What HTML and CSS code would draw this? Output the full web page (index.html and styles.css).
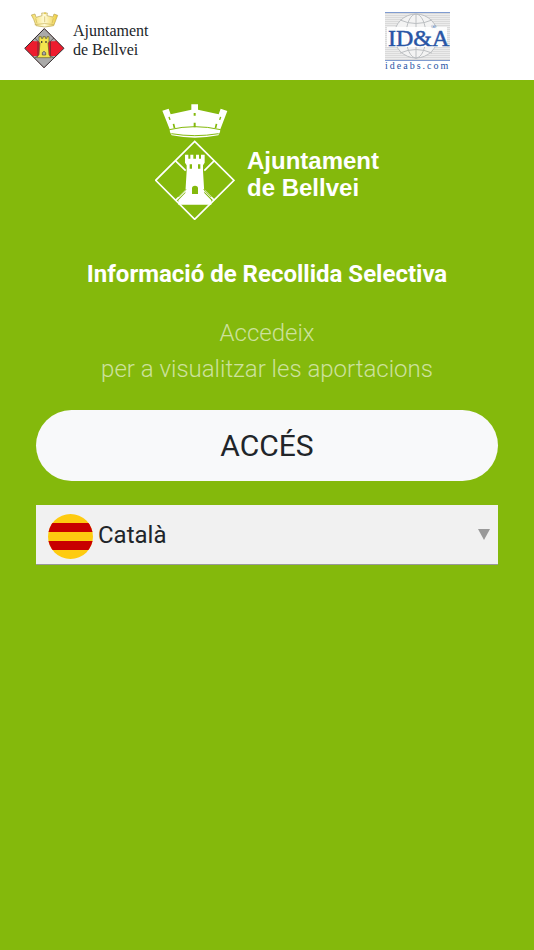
FILE: index.html
```html
<!DOCTYPE html>
<html lang="ca">
<head>
  <meta charset="UTF-8" />
  <meta name="viewport" content="width=device-width, initial-scale=1.0"/>
  <title>Ajuntament de Bellvei</title>
  <link rel="stylesheet" href="styles.css">
</head>
<body>
  <header class="topbar">
    <div class="brand">
      <svg class="brand-crest" viewBox="72 36 123 171" aria-hidden="true">
        <defs>
          <linearGradient id="gold">
            <stop offset="0" stop-color="#f4dc62"/>
            <stop offset="0.5" stop-color="#fffbd8"/>
            <stop offset="1" stop-color="#edcb35"/>
          </linearGradient>
          <clipPath id="lozenge"><path d="M133 85 192 145 132 204 74 145z"/></clipPath>
        </defs>
        <path d="M94 45l11-3 3 10 18-5-1-8h17l-1 8 18 4 3-9 11 4-5 13-7 18q-26 8-53 0l-7-19z" fill="url(#gold)" stroke="#b9a553" stroke-width="2"/>
        <path d="M107 55l4 15M134 49v18M160 55l-4 15M104 74q30-7 58 0" fill="none" stroke="#c8b25b" stroke-width="2"/>
        <circle cx="135" cy="40" r="3" fill="#e3c84c"/>
        <g clip-path="url(#lozenge)">
          <path d="M70 80h126v126H70z" fill="#ed1c2e"/>
          <path d="M85 80h96v32l-17 12h-62l-17-12zM102 168l62 0 12 12v28H90v-28z" fill="#aaa9a8"/>
          <path d="M102 112l12 12v45l-10 4M164 112l-13 12v45l10 4" fill="none" stroke="#333" stroke-width="2"/>
        </g>
        <path d="M117 110h7v5h5v-5h7v5h5v-5h6v18h-3l3 36 6 9h-43l7-9 3-36h-3z" fill="#f3e44d" stroke="#625d30" stroke-width="2"/>
        <path d="M123 123h4v6h-4zM136 123h4v6h-4z" fill="#4a4738"/>
        <path d="M127 165v-7q5-8 10 0v7z" fill="#aaa" stroke="#4a4738" stroke-width="2"/>
        <path d="M133 86 192 145 132 203 74 145z" fill="none" stroke="#333" stroke-width="3"/>
      </svg>
      <p class="brand-name">Ajuntament<br>de Bellvei</p>
    </div>

    <svg class="partner" viewBox="0 0 66 59" role="img" aria-label="ID&amp;A ideabs.com">
      <defs>
        <pattern id="rules" width="4" height="2" patternUnits="userSpaceOnUse">
          <path d="M0 0h4v2H0z" fill="#ececec"/>
          <path d="M0 1.5h4" stroke="#dadada"/>
        </pattern>
      </defs>
      <path d="M0 1h65v47H0z" fill="url(#rules)"/>
      <g fill="none" stroke="#bcbfc2">
        <circle cx="31" cy="24" r="22" fill="#f3f3f3"/>
        <ellipse cx="31" cy="24" rx="10" ry="22"/>
        <path d="M31 2v45M15 8q16 7 32 0M15 41q16-7 32 0M8 24h45"/>
      </g>
      <path d="M2 15h60v20H2z" fill="#fff" opacity="0.9"/>
      <path d="M0 0.5h65M0 48.5h65" stroke="#7f9bd0"/>
      <text class="partner-mark" x="3" y="34">ID&amp;A</text>
      <text class="partner-reg" x="46" y="17">®</text>
      <text class="partner-url" x="0" y="57">ideabs.com</text>
    </svg>
  </header>

  <main class="content">
    <div class="logo">
      <svg class="logo-crest" viewBox="18 27 240 348" aria-hidden="true">
        <path fill="#fff" d="M40 47l19-6 6 17 62-14V28h20v16l62 14 6-17 20 7-21 55q1 9-6 18-70 14-140 0-7-8-6-18z"/>
        <path fill="none" stroke="#84b90c" stroke-width="3" d="M61 104q76-18 154 0M67 116q70 12 142 0"/>
        <path fill="#84b90c" d="M134 54h6v8h-6zM134 83h6v14h-6zM71 87l5-1 3 13-5 1zM200 86l5 1-3 13-5-1zM58 66l4-1 3 9-4 1zM213 65l4 1-3 9-4-1z"/>
        <path fill="none" stroke="#fff" stroke-width="5" d="M137 139 255 256 137 373 20 256z"/>
        <path fill="none" stroke="#fff" stroke-width="5" d="M79 197l31 30M196 197l-30 30M80 316l30-30M196 316l-30-30"/>
        <path fill="#fff" d="M108 179h10v12h6v-12h9v12h8v-12h9v12h6v-12h11v24l-5 8v17l4 66 21 22v13H88v-13l21-22 4-66v-17l-5-8z"/>
        <path fill="none" stroke="#84b90c" stroke-width="3" d="M111 283l-23 23M164 283l23 23"/>
        <path fill="#84b90c" d="M122 208h7v13h-7zM147 208h7v13h-7zM129 297v-17q0-8 9-8t9 8v17z"/>
      </svg>
      <p class="logo-name">Ajuntament<br>de Bellvei</p>
    </div>

    <h1 class="title">Informació de Recollida Selectiva</h1>
    <p class="intro">Accedeix<br>per a visualitzar les aportacions</p>

    <button class="access" type="button">ACCÉS</button>

    <div class="language">
      <select class="language-select" aria-label="Idioma">
        <option selected>Català</option>
      </select>
      <svg class="language-flag" viewBox="0 0 45 45" aria-hidden="true">
        <clipPath id="disc"><circle cx="22.5" cy="22.5" r="22.5"/></clipPath>
        <g clip-path="url(#disc)">
          <path fill="#fecb10" d="M0 0h45v45H0z"/>
          <path fill="#c80000" d="M0 9h45v9H0zM0 27h45v9H0z"/>
        </g>
      </svg>
      <svg class="language-arrow" viewBox="0 0 12 11" aria-hidden="true">
        <path fill="#999" d="M0 0h12L6 11z"/>
      </svg>
    </div>
  </main>
</body>
</html>
```
FILE: styles.css
```css
:root {
  --green: #84b90c;
  --dark: #212529;
}

* {
  box-sizing: border-box;
}

body {
  margin: 0;
  background-color: var(--green);
  color: var(--dark);
  font-family: Roboto, sans-serif;
  font-size: 24px;
  line-height: 36px;
}

h1, p {
  margin: 0;
}

.topbar {
  display: flex;
  align-items: flex-start;
  justify-content: space-between;
  padding: 12px 83px 9px 24px;
  background: white;
}

.topbar svg {
  display: block;
}

.brand {
  display: flex;
  align-items: center;
  gap: 8px;
}

.brand-crest {
  width: 41px;
  height: 57px;
}

.brand-name {
  padding-bottom: 2px;
  font-family: "Liberation Serif", serif;
  font-size: 16px;
  line-height: 19px;
}

.partner {
  width: 66px;
  height: 59px;
}

.partner-mark,
.partner-reg,
.partner-url {
  font-family: "Liberation Serif", serif;
  fill: #2855a5;
}

.partner-mark {
  font-size: 24px;
  stroke: #2855a5;
  stroke-width: 0.5;
}

.partner-reg {
  font-size: 7px;
}

.partner-url {
  font-size: 10px;
  letter-spacing: 2px;
}

.content {
  display: flex;
  flex-direction: column;
  padding: 24px 36px;
  text-align: center;
}

.logo {
  display: flex;
  align-items: center;
  justify-content: center;
  gap: 12px;
  margin-bottom: 36px;
}

.logo-crest {
  width: 80px;
  height: 116px;
}

.logo-name {
  margin-top: 24px;
  color: white;
  font-family: "Liberation Sans", sans-serif;
  font-weight: bold;
  line-height: 27px;
  text-align: left;
}

.title {
  margin-bottom: 23px;
  color: white;
  font-size: 24px;
  font-weight: bold;
}

.intro {
  margin-bottom: 23px;
  color: rgba(255, 255, 255, 0.6);
  font-weight: 300;
}

.access {
  margin-bottom: 24px;
  padding: 13px 24px;
  border: none;
  border-radius: 36px;
  background: #f8f9fa;
  color: var(--dark);
  font-family: inherit;
  font-size: 30px;
  line-height: 45px;
  cursor: pointer;
}

.language {
  position: relative;
}

.language-select {
  display: block;
  width: 100%;
  height: 60px;
  padding: 0 36px 0 62px;
  border: none;
  border-bottom: 1px solid #999;
  border-radius: 0;
  background: #f1f1f1;
  color: var(--dark);
  font-family: inherit;
  font-size: 24px;
  appearance: none;
}

.language-flag,
.language-arrow {
  position: absolute;
  pointer-events: none;
}

.language-flag {
  top: 9px;
  left: 12px;
  width: 45px;
}

.language-arrow {
  top: 24px;
  right: 8px;
  width: 12px;
}
```
